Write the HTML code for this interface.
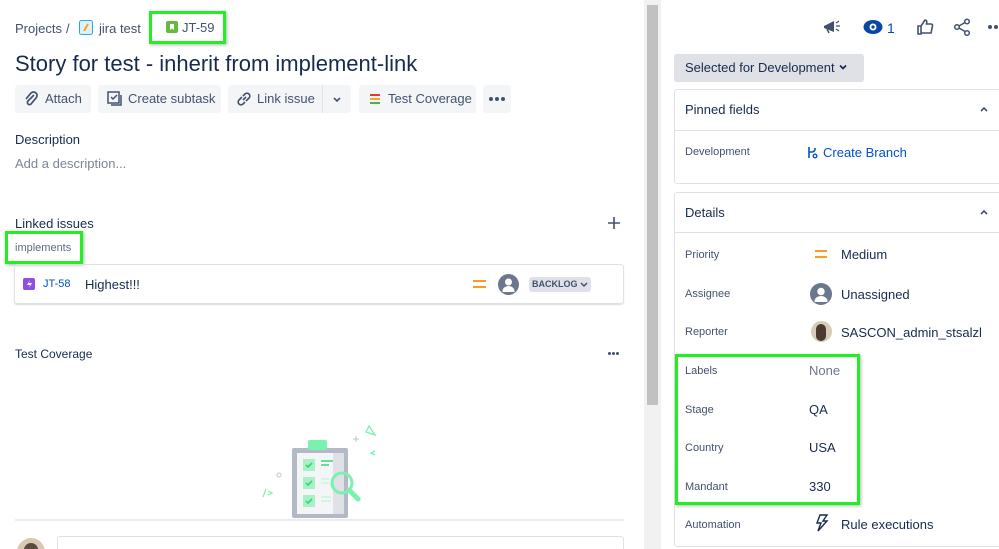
<!DOCTYPE html>
<html style="width:999px;height:549px;overflow:hidden"><head><meta charset="utf-8"><style>
*{box-sizing:border-box;margin:0;padding:0}
body{width:999px;height:549px;overflow:hidden;background:#fff;font-family:"Liberation Sans",sans-serif;color:#172b4d;position:relative}
.a{position:absolute}
.t{font-size:13px;color:#42526e}
.btn{position:absolute;top:85px;height:28px;background:#f4f5f7;border-radius:3px;font-size:13px;color:#42526e;line-height:28px}
.g{position:absolute;border:3px solid #22ee22;box-shadow:1px 1px 3px rgba(0,0,0,.3)}
.lbl{position:absolute;left:685px;font-size:11px;color:#42526e}
.val{position:absolute;font-size:13px;color:#172b4d}
.card{position:absolute;left:674px;width:340px;border:1px solid #dfe1e6;border-radius:3px}
.dots{position:absolute;display:flex;gap:2px}
.dots i{display:block;width:4px;height:4px;border-radius:50%;background:#42526e}
</style></head><body>
<div class="a t" style="left:15px;top:21px">Projects</div>
<div class="a t" style="left:66px;top:21px">/</div>
<svg class="a" style="left:79px;top:20px" width="14" height="15"><rect x="0.5" y="0.5" width="13" height="14" rx="2" fill="#dff2fb" stroke="#29a8e0"/><path d="M5 11 L9 4" stroke="#f5a623" stroke-width="2"/></svg>
<div class="a t" style="left:99px;top:21px">jira test</div>
<svg class="a" style="left:166px;top:21px" width="12" height="12"><rect width="12" height="12" rx="2" fill="#63ba3c"/><path d="M4 3h4v6l-2-1.5-2 1.5z" fill="#fff"/></svg>
<div class="a t" style="left:182px;top:20px">JT-59</div>
<div class="g" style="left:149px;top:11px;width:77px;height:33px"></div>
<div class="a" style="left:15px;top:51px;font-size:22px;color:#172b4d">Story for test - inherit from implement-link</div>

<div class="btn" style="left:15px;width:76px;padding-left:30px">Attach</div>
<svg class="a" style="left:23px;top:91px" width="16" height="16"><path d="M11 4 L5 10 a2 2 0 0 0 3 3 L13 7 a3.5 3.5 0 0 0-5-5 L3 8" fill="none" stroke="#42526e" stroke-width="1.7"/></svg>
<div class="btn" style="left:98px;width:123px;padding-left:30px">Create subtask</div>
<svg class="a" style="left:107px;top:91px" width="16" height="16"><rect x="1" y="1" width="11" height="11" fill="none" stroke="#42526e" stroke-width="1.5"/><path d="M4 6l2 2 4-4M14 4v10H4" fill="none" stroke="#42526e" stroke-width="1.5"/></svg>
<div class="btn" style="left:228px;width:123px;padding-left:29px">Link issue</div>
<div class="a" style="left:322px;top:85px;width:1px;height:28px;background:#dfe1e6"></div>
<svg class="a" style="left:236px;top:91px" width="16" height="16"><path d="M7 9l3-3M6 6l-3 3a2.5 2.5 0 0 0 4 4l2-2M10 10l3-3a2.5 2.5 0 0 0-4-4L7 5" fill="none" stroke="#42526e" stroke-width="1.6"/></svg>
<svg class="a" style="left:332px;top:96px" width="10" height="7"><path d="M2 2l3 3 3-3" fill="none" stroke="#42526e" stroke-width="1.6"/></svg>
<div class="btn" style="left:359px;width:117px;padding-left:29px">Test Coverage</div>
<div class="a" style="left:370px;top:94px;width:10px;height:2px;background:#e53935"></div>
<div class="a" style="left:370px;top:98px;width:10px;height:2px;background:#f5a623"></div>
<div class="a" style="left:370px;top:102px;width:10px;height:2px;background:#4caf50"></div>
<div class="btn" style="left:483px;width:28px"></div>
<div class="dots" style="left:489px;top:97px"><i></i><i></i><i></i></div>

<div class="a" style="left:15px;top:132px;font-size:13px">Description</div>
<div class="a" style="left:15px;top:156px;font-size:13px;color:#7a869a">Add a description...</div>
<div class="a" style="left:15px;top:216px;font-size:13px">Linked issues</div>
<svg class="a" style="left:607px;top:216px" width="14" height="14"><path d="M7 1v12M1 7h12" stroke="#42526e" stroke-width="1.6"/></svg>
<div class="a" style="left:15px;top:242px;font-size:11px;color:#5e6c84">implements</div>
<div class="g" style="left:5px;top:231px;width:78px;height:33px"></div>
<div class="a" style="left:14px;top:264px;width:610px;height:40px;border:1px solid #dfe1e6;border-radius:3px;box-shadow:0 1px 1px rgba(9,30,66,.15)"></div>
<svg class="a" style="left:23px;top:278px" width="12" height="12"><rect width="12" height="12" rx="2" fill="#904ee2"/><path d="M7 2L4 7h3l-1 3 3-5H6z" fill="#fff"/></svg>
<div class="a" style="left:43px;top:278px;font-size:11px;color:#0052cc">JT-58</div>
<div class="a" style="left:85px;top:277px;font-size:13px">Highest!!!</div>
<div class="a" style="left:473px;top:280px;width:13px;height:2px;background:#ff991f"></div>
<div class="a" style="left:473px;top:286px;width:13px;height:2px;background:#ff991f"></div>
<svg class="a" style="left:498px;top:274px" width="21" height="21"><circle cx="10.5" cy="10.5" r="10.5" fill="#6b778c"/><circle cx="10.5" cy="8" r="3.5" fill="#fff"/><path d="M4.5 17a6 5 0 0 1 12 0v1h-12z" fill="#fff"/></svg>
<div class="a" style="left:529px;top:277px;width:62px;height:15px;background:#dfe1e6;border-radius:3px;font-size:9px;font-weight:bold;color:#42526e;line-height:15px;padding-left:3px">BACKLOG</div>
<svg class="a" style="left:580px;top:282px" width="8" height="6"><path d="M1 1l3 3 3-3" fill="none" stroke="#42526e" stroke-width="1.5"/></svg>

<div class="a" style="left:15px;top:347px;font-size:12px">Test Coverage</div>
<div class="dots" style="left:608px;top:352px;gap:1px"><i style="width:3px;height:3px"></i><i style="width:3px;height:3px"></i><i style="width:3px;height:3px"></i></div>
<svg class="a" style="left:255px;top:420px" width="130" height="100">
<path d="M114 6 L120 15 L111 12 Z" fill="none" stroke="#79f2b0" stroke-width="1.3"/>
<path d="M101 16v6M98 19h6" stroke="#c1c7d0" stroke-width="1"/>
<path d="M120 31l-4 2 4 2" fill="none" stroke="#79f2b0" stroke-width="1.3"/>
<circle cx="24" cy="55" r="2" fill="none" stroke="#c1c7d0"/>
<path d="M8 77l3-8M13 71l4 2-4 2" fill="none" stroke="#79f2b0" stroke-width="1.2"/>
<rect x="37" y="28" width="56" height="70" rx="2" fill="#b3bac5"/>
<rect x="42" y="33" width="36" height="61" fill="#f4f5f7"/>
<rect x="78" y="33" width="11" height="61" fill="#dfe1e6"/>
<rect x="53" y="20" width="19" height="10" rx="2" fill="#79f2b0"/>
<g fill="#a8f0c6"><rect x="48" y="39" width="12" height="12"/><rect x="48" y="57" width="12" height="12"/><rect x="48" y="75" width="12" height="12"/></g>
<g stroke="#36d67a" stroke-width="1.6" fill="none"><path d="M51 45l2 2 4-4M51 63l2 2 4-4M51 81l2 2 4-4"/></g>
<path d="M66 41h12M66 45h8" stroke="#36d67a" stroke-width="1.6"/>
<path d="M66 59h8M66 63h8M66 77h10M66 81h10" stroke="#c8f5da" stroke-width="1.6"/>
<circle cx="87" cy="63" r="10" fill="none" stroke="#79f2b0" stroke-width="3"/>
<path d="M94 70l9 9" stroke="#79f2b0" stroke-width="5" stroke-linecap="round"/>
</svg>
<div class="a" style="left:15px;top:519px;width:609px;height:2px;background:#ebecf0"></div>
<div class="a" style="left:57px;top:536px;width:567px;height:20px;border:1px solid #dfe1e6;border-radius:3px"></div>
<div class="a" style="left:17px;top:538px;width:28px;height:28px;border-radius:50%;background:#d9c9b4"></div>
<div class="a" style="left:24px;top:543px;width:14px;height:14px;border-radius:50%;background:#5a4a40"></div>

<div class="a" style="left:644px;top:0;width:17px;height:549px;background:#f1f1f1"></div>
<div class="a" style="left:647px;top:5px;width:11px;height:400px;background:#c1c1c1"></div>

<svg class="a" style="left:822px;top:17px" width="20" height="18"><path d="M2 9l10-5v11L2 11z" fill="#42526e"/><path d="M5 12l2 4" stroke="#42526e" stroke-width="1.5"/><path d="M14 6l3-2M14 9h4M14 12l3 2" stroke="#42526e" stroke-width="1.3"/></svg>
<svg class="a" style="left:863px;top:20px" width="20" height="14"><ellipse cx="10" cy="7" rx="9.5" ry="7" fill="#0747a6"/><circle cx="10" cy="7" r="3.5" fill="#fff"/><circle cx="10" cy="7" r="1.6" fill="#0747a6"/></svg>
<div class="a" style="left:887px;top:20px;font-size:14px;color:#0747a6">1</div>
<svg class="a" style="left:916px;top:18px" width="18" height="18"><path d="M2 8h3v8H2zM5 8l4-6c2 0 2 2 1.5 4H15a1.5 1.5 0 0 1 1.5 2l-1.5 7H5" fill="none" stroke="#42526e" stroke-width="1.6"/></svg>
<svg class="a" style="left:953px;top:18px" width="18" height="18"><circle cx="14" cy="3.5" r="2.3" fill="none" stroke="#42526e" stroke-width="1.5"/><circle cx="4" cy="9" r="2.3" fill="none" stroke="#42526e" stroke-width="1.5"/><circle cx="14" cy="15" r="2.3" fill="none" stroke="#42526e" stroke-width="1.5"/><path d="M6 8l6-3.5M6 10l6 3.5" stroke="#42526e" stroke-width="1.5"/></svg>
<div class="dots" style="left:988px;top:25px"><i></i><i></i><i></i></div>

<div class="a" style="left:674px;top:54px;width:190px;height:28px;background:#dfe1e6;border-radius:3px;font-size:13px;color:#172b4d;line-height:28px;padding-left:11px">Selected for Development</div>
<svg class="a" style="left:838px;top:64px" width="10" height="7"><path d="M2 1.5l3 3 3-3" fill="none" stroke="#172b4d" stroke-width="1.7"/></svg>

<div class="card" style="top:89px;height:95px"></div>
<div class="a" style="left:675px;top:130px;width:330px;height:1px;background:#dfe1e6"></div>
<div class="a" style="left:685px;top:102px;font-size:13px">Pinned fields</div>
<svg class="a" style="left:979px;top:106px" width="10" height="7"><path d="M2 5l3-3 3 3" fill="none" stroke="#42526e" stroke-width="1.6"/></svg>
<div class="lbl" style="top:146px">Development</div>
<svg class="a" style="left:806px;top:146px" width="12" height="13"><path d="M3 1v11M3 6h3a3 3 0 0 0 3-3V2" fill="none" stroke="#0052cc" stroke-width="1.6"/><circle cx="9" cy="10" r="1.8" fill="none" stroke="#0052cc" stroke-width="1.4"/></svg>
<div class="val" style="left:823px;top:145px;color:#0052cc">Create Branch</div>

<div class="card" style="top:192px;height:355px"></div>
<div class="a" style="left:675px;top:232px;width:330px;height:1px;background:#dfe1e6"></div>
<div class="a" style="left:685px;top:205px;font-size:13px">Details</div>
<svg class="a" style="left:979px;top:209px" width="10" height="7"><path d="M2 5l3-3 3 3" fill="none" stroke="#42526e" stroke-width="1.6"/></svg>

<div class="lbl" style="top:249px">Priority</div>
<div class="a" style="left:815px;top:250px;width:12px;height:2px;background:#ff991f"></div>
<div class="a" style="left:815px;top:256px;width:12px;height:2px;background:#ff991f"></div>
<div class="val" style="left:841px;top:247px">Medium</div>
<div class="lbl" style="top:288px">Assignee</div>
<svg class="a" style="left:810px;top:283px" width="22" height="22"><circle cx="11" cy="11" r="11" fill="#6b778c"/><circle cx="11" cy="8.5" r="3.7" fill="#fff"/><path d="M4.5 18a6.5 5 0 0 1 13 0v1h-13z" fill="#fff"/></svg>
<div class="val" style="left:841px;top:287px">Unassigned</div>
<div class="lbl" style="top:326px">Reporter</div>
<div class="a" style="left:811px;top:321px;width:21px;height:21px;border-radius:50%;background:#d8cbb8"></div>
<div class="a" style="left:816px;top:324px;width:10px;height:17px;border-radius:5px;background:#4a3a30"></div>
<div class="val" style="left:841px;top:325px">SASCON_admin_stsalzl</div>

<div class="lbl" style="top:365px">Labels</div>
<div class="val" style="left:809px;top:363px;color:#6b778c">None</div>
<div class="lbl" style="top:404px">Stage</div>
<div class="val" style="left:809px;top:402px">QA</div>
<div class="lbl" style="top:442px">Country</div>
<div class="val" style="left:809px;top:440px">USA</div>
<div class="lbl" style="top:481px">Mandant</div>
<div class="val" style="left:809px;top:479px">330</div>
<div class="g" style="left:675px;top:354px;width:185px;height:151px"></div>
<div class="lbl" style="top:519px">Automation</div>
<svg class="a" style="left:815px;top:514px" width="14" height="18"><path d="M5 1h7l-4 6h4L3 17l3-8H2z" fill="none" stroke="#172b4d" stroke-width="1.4"/></svg>
<div class="val" style="left:841px;top:517px">Rule executions</div>
</body></html>
